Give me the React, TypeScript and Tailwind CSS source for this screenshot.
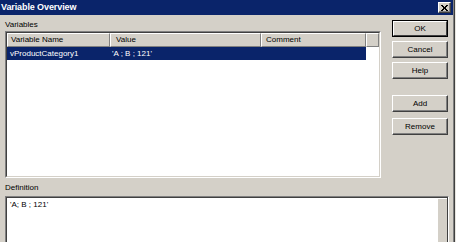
import React from "react";

const raised =
  "border border-t-white border-l-white border-r-[#404040] border-b-[#404040] shadow-[inset_-1px_-1px_0_#808080]";

function Btn({ label, isDefault }: { label: string; isDefault?: boolean }) {
  if (isDefault) {
    return (
      <div className="w-[56px] h-[17px] border border-black bg-[#d4d0c8]">
        <div className="w-full h-full border border-t-white border-l-white border-r-[#404040] border-b-[#404040] flex items-center justify-center text-black leading-none">
          {label}
        </div>
      </div>
    );
  }
  return (
    <div className={`w-[56px] h-[17px] bg-[#d4d0c8] flex items-center justify-center text-black leading-none ${raised}`}>
      {label}
    </div>
  );
}

function HeaderCell({ w, label, pl }: { w: number; label?: string; pl: string }) {
  return (
    <div
      style={{ width: w }}
      className={`h-[14px] shrink-0 bg-[#d4d0c8] border-t border-l border-t-white border-l-white border-r border-b border-r-[#808080] border-b-[#808080] flex items-center ${pl} text-black leading-none whitespace-nowrap overflow-hidden`}
    >
      {label}
    </div>
  );
}

export default function App() {
  return (
    <div
      className="w-[456px] h-[242px] overflow-hidden bg-[#e8e6e0] text-[8px]"
      style={{ fontFamily: '"Liberation Sans", Arial, sans-serif' }}
    >
      <div className="w-[455px] h-full border-r border-r-[#404040]">
        <div className="w-full h-full border-r border-r-[#808080] bg-[#d4d0c8] flex flex-col">
          {/* Title bar */}
          <div className="h-[15px] bg-[#0a246a] flex items-center justify-between pl-[1px] pr-[2px] shrink-0">
            <span className="text-white font-bold text-[9px] leading-none tracking-[-0.1px]">Variable Overview</span>
            <div className={`w-[13px] h-[11px] bg-[#d4d0c8] flex items-center justify-center ${raised}`}>
              <svg width="7" height="6" viewBox="0 0 7 6" shapeRendering="crispEdges">
                <path d="M0 0h2v1H0zM5 0h2v1H5zM1 1h2v1H1zM4 1h2v1H4zM2 2h3v2H2zM1 4h2v1H1zM4 4h2v1H4zM0 5h2v1H0zM5 5h2v1H5z" fill="#000" />
              </svg>
            </div>
          </div>

          {/* Body */}
          <div className="flex flex-col pl-[5px]">
            <div className="flex">
              <div className="flex flex-col w-[376px] shrink-0">
                <div className="h-[12px] mt-[4px] leading-[12px] text-black">Variables</div>
                <div className="h-[147px] border border-t-[#808080] border-l-[#808080] border-r-white border-b-white">
                  <div className="w-full h-full border border-t-[#404040] border-l-[#404040] border-r-[#d4d0c8] border-b-[#d4d0c8] bg-white overflow-hidden">
                    <div className="flex">
                      <HeaderCell w={103} label="Variable Name" pl="pl-[3px]" />
                      <HeaderCell w={151} label="Value" pl="pl-[5px]" />
                      <HeaderCell w={105} label="Comment" pl="pl-[4px]" />
                      <HeaderCell w={13} pl="pl-0" />
                    </div>
                    <div className="w-[359px] h-[13px] bg-[#0a246a] flex items-center text-white leading-none">
                      <div className="w-[103px] pl-[3px] shrink-0">vProductCategory1</div>
                      <div className="pl-[2px]">'A ; B ; 121'</div>
                    </div>
                  </div>
                </div>
              </div>
              <div className="ml-[11px] mt-[5px] flex flex-col">
                <Btn label="OK" isDefault />
                <div className="h-[4px]" />
                <Btn label="Cancel" />
                <div className="h-[4px]" />
                <Btn label="Help" />
                <div className="h-[16px]" />
                <Btn label="Add" />
                <div className="h-[6px]" />
                <Btn label="Remove" />
              </div>
            </div>

            <div className="h-[12px] mt-[4px] leading-[12px] text-black">Definition</div>
            <div className="w-[444px] h-[60px] mt-[2px] border border-t-[#808080] border-l-[#808080] border-r-white border-b-white">
              <div className="w-full h-full border border-t-[#404040] border-l-[#404040] border-r-[#404040] border-b-[#d4d0c8] bg-white flex">
                <div className="flex-1 pl-[3px] pt-[3px] text-black leading-none">'A; B ; 121'</div>
                <div className="w-[10px] mt-[1px] bg-[#d4d0c8] border-l border-l-white" />
              </div>
            </div>
          </div>
        </div>
      </div>
    </div>
  );
}
